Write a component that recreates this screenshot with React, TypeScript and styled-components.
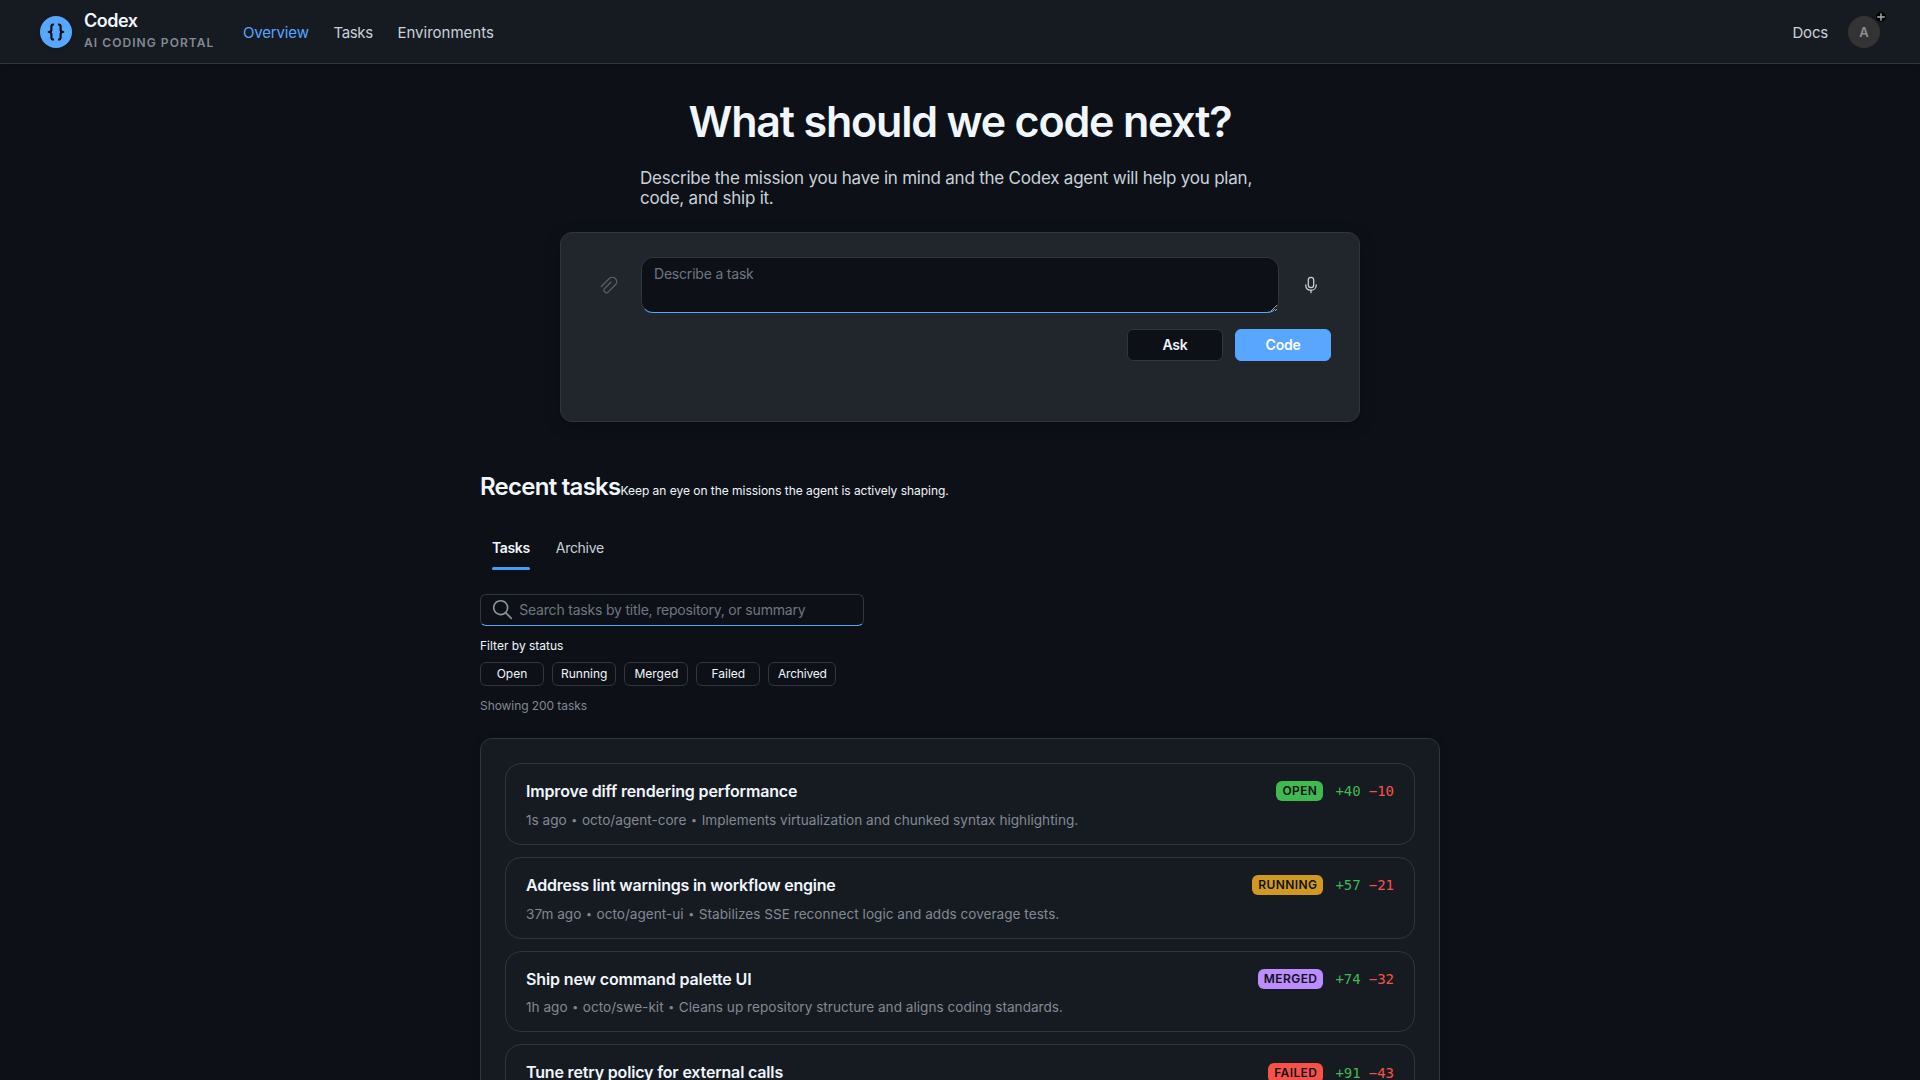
import React, { Fragment } from "react";
import styled, { createGlobalStyle, css } from "styled-components";

const color = {
  page: "#0d1117",
  surface: "#161b22",
  raised: "#21262d",
  border: "#30363d",
  text: "#f0f6fc",
  soft: "#c9d1d9",
  muted: "#828993",
  placeholder: "#6e7681",
  accent: "#58a6ff",
  green: "#3fb950",
  red: "#f85149",
};

const GlobalStyle = createGlobalStyle`
  *, *::before, *::after { box-sizing: border-box; }
  html, body { margin: 0; background: ${color.page}; }
  body {
    height: 100vh;
    overflow: hidden;
    color: ${color.text};
    font-family: Inter, "Liberation Sans", sans-serif;
  }
  h1, h2, h3, p { margin: 0; }
  button, input, textarea { font-family: inherit; }
`;

const Header = styled.header`
  display: flex;
  align-items: center;
  height: 64px;
  padding: 0 40px;
  background: ${color.surface};
  box-shadow: inset 0 -1px 0 ${color.border}, 0 2px 8px rgba(0, 0, 0, 0.18);
`;

const Brand = styled.div`
  display: flex;
  align-items: center;
  gap: 12px;
  width: 203px;
`;

const Logo = styled.div`
  display: flex;
  align-items: center;
  justify-content: center;
  flex: none;
  width: 32px;
  height: 32px;
  border-radius: 50%;
  background: ${color.accent};
  color: ${color.page};
  box-shadow: 0 2px 4px rgba(0, 0, 0, 0.15);
`;

const BrandText = styled.div`
  display: flex;
  flex-direction: column;
  white-space: nowrap;
`;

const BrandName = styled.span`
  font-size: 18px;
  font-weight: 600;
  line-height: 22px;
  letter-spacing: -0.5px;
`;

const BrandTag = styled.span`
  font-size: 12px;
  font-weight: 600;
  line-height: 22px;
  letter-spacing: 1.06px;
  color: ${color.muted};
`;

const Nav = styled.nav`
  display: flex;
  flex: 1;
  gap: 24.8px;
`;

const NavLink = styled.a<{ $active?: boolean; $tracking?: number }>`
  font-size: 15px;
  line-height: 20px;
  padding-top: 1px;
  letter-spacing: ${(p) => p.$tracking ?? 0}px;
  color: ${(p) => (p.$active ? color.accent : color.soft)};
`;

const HeaderEnd = styled.div`
  display: flex;
  align-items: center;
  gap: 20px;
`;

const Avatar = styled.div`
  position: relative;
  display: flex;
  align-items: center;
  justify-content: center;
  width: 32px;
  height: 32px;
  border-radius: 50%;
  background: #333333;
  color: #8b919a;
  font-size: 13px;
  font-weight: 600;
`;

const PresenceBadge = styled.span`
  position: absolute;
  top: -4px;
  right: -6px;
  display: flex;
  width: 10px;
  height: 10px;
  border-radius: 50%;
  background: #000;
  color: #adadad;
`;

const Main = styled.main`
  display: flex;
  flex-direction: column;
  align-items: center;
  padding-top: 31px;
`;

const Title = styled.h1`
  font-size: 43px;
  font-weight: 600;
  line-height: 52px;
  letter-spacing: -1.2px;
`;

const Lead = styled.p`
  width: 640px;
  margin-top: 21px;
  font-size: 17px;
  line-height: 20px;
  letter-spacing: -0.225px;
  color: ${color.soft};
`;

const Composer = styled.section`
  width: 800px;
  height: 190px;
  margin-top: 24px;
  padding: 24px 28px;
  border: 1px solid ${color.border};
  border-radius: 12px;
  background: ${color.raised};
  box-shadow: 0 4px 16px rgba(0, 0, 0, 0.24);
`;

const ComposerRow = styled.div`
  display: flex;
  align-items: center;
  gap: 12px;
`;

const IconButton = styled.button`
  display: flex;
  align-items: center;
  justify-content: center;
  width: 40px;
  height: 32px;
  padding: 0;
  border: 0;
  background: transparent;
  color: ${color.soft};
  &:disabled { color: #5a6068; }
`;

const fieldBorder = css`
  border: 1px solid ${color.border};
  border-bottom-color: ${color.accent};
`;

const TaskInput = styled.textarea`
  display: block;
  flex: 1;
  min-width: 0;
  height: 56px;
  padding: 7px 12px;
  ${fieldBorder}
  border-radius: 12px;
  outline: 0;
  background: ${color.page};
  color: ${color.text};
  font-size: 14px;
  line-height: 17px;
  letter-spacing: -0.2px;
  resize: vertical;
  &::placeholder { color: ${color.placeholder}; }
`;

const ComposerActions = styled.div`
  display: flex;
  justify-content: flex-end;
  gap: 12px;
  margin-top: 16px;
`;

const ActionButton = styled.button<{ $primary?: boolean }>`
  width: 96px;
  height: 32px;
  padding: 0 0 1px;
  border: 1px solid ${(p) => (p.$primary ? color.accent : color.border)};
  border-radius: 6px;
  background: ${(p) => (p.$primary ? color.accent : color.page)};
  color: ${(p) => (p.$primary ? "#fff" : color.text)};
  font-size: 14px;
  font-weight: 600;
  line-height: 17px;
  letter-spacing: -0.25px;
`;

const Recent = styled.section`
  display: flex;
  flex-direction: column;
  align-items: flex-start;
  width: 960px;
  margin-top: 49px;
`;

const SectionHead = styled.div`
  display: flex;
  align-items: baseline;
`;

const SectionTitle = styled.h2`
  font-size: 24px;
  font-weight: 600;
  line-height: 32px;
  letter-spacing: -0.74px;
`;

const SectionNote = styled.span`
  font-size: 12px;
  line-height: 16px;
  letter-spacing: -0.03px;
`;

const TabList = styled.div`
  display: flex;
  gap: 2px;
  margin-top: 23px;
`;

const Tab = styled.button<{ $active?: boolean }>`
  position: relative;
  height: 44px;
  padding: 0 12px 2px;
  border: 0;
  background: transparent;
  font-size: 14px;
  font-weight: ${(p) => (p.$active ? 600 : 400)};
  letter-spacing: ${(p) => (p.$active ? -0.36 : -0.3)}px;
  color: ${(p) => (p.$active ? color.text : color.soft)};
  ${(p) =>
    p.$active &&
    css`
      &::after {
        content: "";
        position: absolute;
        left: 12px;
        right: 12px;
        bottom: 0;
        height: 3px;
        border-radius: 2px;
        background: #479ef5;
      }
    `}
`;

const SearchBox = styled.label`
  display: flex;
  align-items: center;
  width: 384px;
  height: 32px;
  margin-top: 24px;
  padding: 0 10px 0 9px;
  ${fieldBorder}
  border-radius: 6px;
  color: #8b949e;
`;

const SearchInput = styled.input`
  flex: 1;
  min-width: 0;
  height: 24px;
  margin-left: 3.6px;
  padding: 0 0 2px;
  border: 0;
  outline: 0;
  background: transparent;
  color: ${color.text};
  font-size: 14px;
  letter-spacing: -0.195px;
  &::placeholder { color: ${color.placeholder}; }
`;

const FilterLabel = styled.div`
  margin-top: 12px;
  font-size: 12px;
  line-height: 16px;
`;

const Filters = styled.div`
  display: flex;
  gap: 8px;
  margin-top: 8px;
`;

const FilterChip = styled.button`
  min-width: 64px;
  height: 24px;
  padding: 0 8px 2px;
  border: 1px solid ${color.border};
  border-radius: 6px;
  background: transparent;
  color: ${color.text};
  font-size: 12px;
  &:last-child { letter-spacing: -0.2px; width: 68px; }
`;

const Count = styled.div`
  margin-top: 12px;
  font-size: 12px;
  line-height: 16px;
  letter-spacing: -0.07px;
  color: ${color.muted};
`;

const TaskPanel = styled.div`
  display: flex;
  flex-direction: column;
  gap: 12px;
  width: 100%;
  margin-top: 24px;
  padding: 24px;
  border: 1px solid ${color.border};
  border-radius: 12px;
  background: ${color.surface};
  box-shadow: 0 2px 8px rgba(0, 0, 0, 0.2);
`;

const TaskCard = styled.article`
  display: flex;
  justify-content: space-between;
  align-items: flex-start;
  height: 81.8px;
  padding: 16px 20px;
  border: 1px solid ${color.border};
  border-radius: 16px;
`;

const TaskTitle = styled.h3<{ $tracking: number }>`
  font-size: 16px;
  font-weight: 600;
  line-height: 22.4px;
  letter-spacing: ${(p) => p.$tracking}px;
`;

const TaskMeta = styled.p`
  margin-top: 9.4px;
  font-size: 13.6px;
  line-height: 16.4px;
  letter-spacing: 0.01px;
  color: ${color.muted};
`;

const Bullet = styled.span`
  padding: 0 0.8px;
  font-size: 10.5px;
  line-height: 1;
  vertical-align: 1px;
`;

const TaskStatus = styled.div`
  display: flex;
  align-items: center;
  height: 22.4px;
`;

const statusColor = {
  OPEN: color.green,
  RUNNING: "#d29922",
  MERGED: "#bc8cff",
  FAILED: color.red,
};

type Status = keyof typeof statusColor;

const StatusBadge = styled.span<{ $status: Status }>`
  height: 20px;
  margin-right: 12px;
  padding: 0 6px;
  border-radius: 6px;
  background: ${(p) => statusColor[p.$status]};
  color: ${color.page};
  font-size: 12px;
  font-weight: 600;
  line-height: 20px;
  letter-spacing: 0.42px;
`;

const Diff = styled.span<{ $removed?: boolean }>`
  width: 25.3px;
  margin-left: ${(p) => (p.$removed ? 8 : 0)}px;
  font-family: "DejaVu Sans Mono", monospace;
  font-size: 14px;
  line-height: 20px;
  color: ${(p) => (p.$removed ? color.red : color.green)};
`;

const BracesIcon = () => (
  <svg width="18" height="18" viewBox="0 0 18 18" fill="none" stroke="currentColor" strokeWidth="2.2" strokeLinejoin="round">
    <path d="M7 1.500H6.400C5.100 1.500 4.400 2.200 4.400 3.500v3C4.400 8 3.400 9 1.800 9c1.600 0 2.600 1 2.600 2.500v3c0 1.300.7 2 2 2H7" />
    <path d="M11 1.500h.6c1.300 0 2 .7 2 2v3C13.600 8 14.600 9 16.200 9c-1.600 0-2.600 1-2.600 2.500v3c0 1.300-.7 2-2 2H11" />
  </svg>
);

const PlusIcon = () => (
  <svg width="10" height="10" viewBox="0 0 10 10" fill="none" stroke="currentColor" strokeWidth="1.400">
    <path d="M5 1.200v7.600M1.200 5h7.600" />
  </svg>
);

const AttachIcon = () => (
  <svg width="20" height="20" viewBox="0 0 24 24" fill="currentColor">
    <path d="m11.772 3.743a6 6 0 0 1 8.660 8.302l-.19.197-8.800 8.798-.036.030a3.723 3.723 0 0 1-5.489-4.973.764.764 0 0 1 .085-.130l.054-.060.086-.088.142-.148.002.003 7.436-7.454a.75.75 0 0 1 .977-.074l.084.073a.75.75 0 0 1 .074.976l-.073.084-7.594 7.613a2.230 2.230 0 0 0 3.174 3.106l8.832-8.830A4.502 4.502 0 0 0 13 4.644l-.168.160-.013.014-9.536 9.536a.75.75 0 0 1-1.133-.977l.072-.084 9.549-9.550Z" />
  </svg>
);

const MicIcon = () => (
  <svg width="20" height="20" viewBox="0 0 24 24" fill="currentColor">
    <path d="M18.250 11a.75.75 0 0 1 .743.648l.007.102v.5a6.750 6.750 0 0 1-6.249 6.732l-.001 2.268a.75.75 0 0 1-1.493.102l-.007-.102v-2.268a6.750 6.750 0 0 1-6.246-6.496L5 12.250v-.5a.75.75 0 0 1 1.493-.102l.007.102v.5a5.250 5.250 0 0 0 5.034 5.246l.216.004h.5a5.250 5.250 0 0 0 5.246-5.034l.004-.216v-.5a.75.75 0 0 1 .75-.75ZM12 2a4 4 0 0 1 4 4v6a4 4 0 0 1-8 0V6a4 4 0 0 1 4-4Zm0 1.500A2.500 2.500 0 0 0 9.500 6v6a2.500 2.500 0 0 0 5 0V6A2.500 2.500 0 0 0 12 3.500Z" />
  </svg>
);

const SearchIcon = () => (
  <svg width="25.6" height="25.6" viewBox="0 0 24 24" fill="currentColor">
    <path d="M10 2.750a7.250 7.250 0 0 1 5.630 11.819l4.900 4.900a.75.75 0 0 1-.976 1.134l-.084-.073-4.901-4.900A7.250 7.250 0 1 1 10 2.750Zm0 1.500a5.750 5.750 0 1 0 0 11.500 5.750 5.750 0 0 0 0-11.500Z" />
  </svg>
);

interface Task {
  title: string;
  tracking: number;
  meta: string[];
  status: Status;
  added: number;
  removed: number;
}

const tasks: Task[] = [
  {
    title: "Improve diff rendering performance",
    tracking: -0.15,
    meta: ["1s ago", "octo/agent-core", "Implements virtualization and chunked syntax highlighting."],
    status: "OPEN",
    added: 40,
    removed: 10,
  },
  {
    title: "Address lint warnings in workflow engine",
    tracking: -0.23,
    meta: ["37m ago", "octo/agent-ui", "Stabilizes SSE reconnect logic and adds coverage tests."],
    status: "RUNNING",
    added: 57,
    removed: 21,
  },
  {
    title: "Ship new command palette UI",
    tracking: -0.13,
    meta: ["1h ago", "octo/swe-kit", "Cleans up repository structure and aligns coding standards."],
    status: "MERGED",
    added: 74,
    removed: 32,
  },
  {
    title: "Tune retry policy for external calls",
    tracking: -0.17,
    meta: [],
    status: "FAILED",
    added: 91,
    removed: 43,
  },
];

const filters = ["Open", "Running", "Merged", "Failed", "Archived"];

export default function App() {
  return (
    <>
      <GlobalStyle />
      <Header>
        <Brand>
          <Logo><BracesIcon /></Logo>
          <BrandText>
            <BrandName>Codex</BrandName>
            <BrandTag>AI CODING PORTAL</BrandTag>
          </BrandText>
        </Brand>
        <Nav>
          <NavLink $active $tracking={-0.16}>Overview</NavLink>
          <NavLink $tracking={-0.4}>Tasks</NavLink>
          <NavLink>Environments</NavLink>
        </Nav>
        <HeaderEnd>
          <NavLink $tracking={-0.2}>Docs</NavLink>
          <Avatar>
            A
            <PresenceBadge><PlusIcon /></PresenceBadge>
          </Avatar>
        </HeaderEnd>
      </Header>
      <Main>
        <Title>What should we code next?</Title>
        <Lead>
          Describe the mission you have in mind and the Codex agent will help you plan, code, and ship it.
        </Lead>
        <Composer>
          <ComposerRow>
            <IconButton disabled aria-label="Attach"><AttachIcon /></IconButton>
            <TaskInput placeholder="Describe a task" />
            <IconButton aria-label="Dictate"><MicIcon /></IconButton>
          </ComposerRow>
          <ComposerActions>
            <ActionButton>Ask</ActionButton>
            <ActionButton $primary>Code</ActionButton>
          </ComposerActions>
        </Composer>
        <Recent>
          <SectionHead>
            <SectionTitle>Recent tasks</SectionTitle>
            <SectionNote>Keep an eye on the missions the agent is actively shaping.</SectionNote>
          </SectionHead>
          <TabList>
            <Tab $active>Tasks</Tab>
            <Tab>Archive</Tab>
          </TabList>
          <SearchBox>
            <SearchIcon />
            <SearchInput placeholder="Search tasks by title, repository, or summary" />
          </SearchBox>
          <FilterLabel>Filter by status</FilterLabel>
          <Filters>
            {filters.map((name) => (
              <FilterChip key={name}>{name}</FilterChip>
            ))}
          </Filters>
          <Count>Showing 200 tasks</Count>
          <TaskPanel>
            {tasks.map((task) => (
              <TaskCard key={task.title}>
                <div>
                  <TaskTitle $tracking={task.tracking}>{task.title}</TaskTitle>
                  <TaskMeta>
                    {task.meta.map((part, i) => (
                      <Fragment key={part}>
                        {i > 0 && <> <Bullet>•</Bullet> </>}
                        {part}
                      </Fragment>
                    ))}
                  </TaskMeta>
                </div>
                <TaskStatus>
                  <StatusBadge $status={task.status}>{task.status}</StatusBadge>
                  <Diff>+{task.added}</Diff>
                  <Diff $removed>−{task.removed}</Diff>
                </TaskStatus>
              </TaskCard>
            ))}
          </TaskPanel>
        </Recent>
      </Main>
    </>
  );
}
